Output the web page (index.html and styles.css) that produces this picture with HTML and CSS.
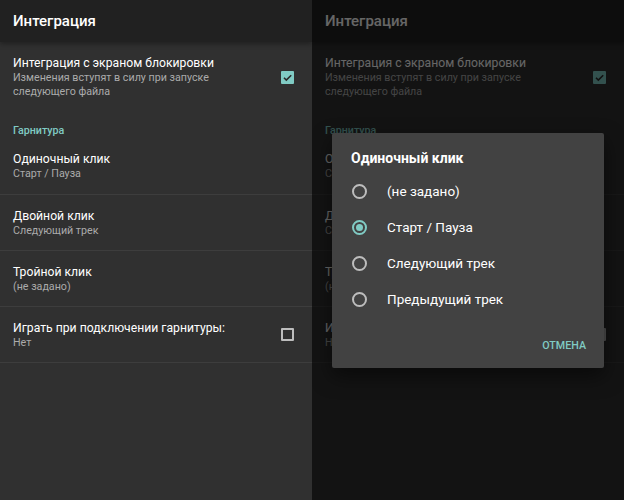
FILE: index.html
```html
<!DOCTYPE html>
<html lang="ru">
<head>
  <meta charset="UTF-8">
  <meta name="viewport" content="width=device-width, initial-scale=1.0">
  <title>Интеграция</title>
  <link rel="stylesheet" href="styles.css">
</head>
<body>
  <div class="screens">
    <section class="screen">
      <header class="toolbar">Интеграция</header>
      <div class="pref pref-first">
        <div class="pref-text">
          <div class="pref-title">Интеграция с экраном блокировки</div>
          <div class="pref-summary">Изменения вступят в силу при запуске следующего файла</div>
        </div>
        <span class="checkbox checked">
          <svg width="13" height="13" viewBox="0 0 13 13"><path d="M3 6.8l2.3 2.3L10.2 4.2" fill="none" stroke="#2b2b2b" stroke-width="1.6"/></svg>
        </span>
      </div>
      <div class="category">Гарнитура</div>
      <div class="pref">
        <div class="pref-text">
          <div class="pref-title">Одиночный клик</div>
          <div class="pref-summary">Старт / Пауза</div>
        </div>
      </div>
      <div class="pref">
        <div class="pref-text">
          <div class="pref-title">Двойной клик</div>
          <div class="pref-summary">Следующий трек</div>
        </div>
      </div>
      <div class="pref">
        <div class="pref-text">
          <div class="pref-title">Тройной клик</div>
          <div class="pref-summary">(не задано)</div>
        </div>
      </div>
      <div class="pref">
        <div class="pref-text">
          <div class="pref-title">Играть при подключении гарнитуры:</div>
          <div class="pref-summary">Нет</div>
        </div>
        <span class="checkbox"></span>
      </div>
    </section>

    <section class="screen">
      <header class="toolbar">Интеграция</header>
      <div class="pref pref-first">
        <div class="pref-text">
          <div class="pref-title">Интеграция с экраном блокировки</div>
          <div class="pref-summary">Изменения вступят в силу при запуске следующего файла</div>
        </div>
        <span class="checkbox checked">
          <svg width="13" height="13" viewBox="0 0 13 13"><path d="M3 6.8l2.3 2.3L10.2 4.2" fill="none" stroke="#2b2b2b" stroke-width="1.6"/></svg>
        </span>
      </div>
      <div class="category">Гарнитура</div>
      <div class="pref">
        <div class="pref-text">
          <div class="pref-title">Одиночный клик</div>
          <div class="pref-summary">Старт / Пауза</div>
        </div>
      </div>
      <div class="pref">
        <div class="pref-text">
          <div class="pref-title">Двойной клик</div>
          <div class="pref-summary">Следующий трек</div>
        </div>
      </div>
      <div class="pref">
        <div class="pref-text">
          <div class="pref-title">Тройной клик</div>
          <div class="pref-summary">(не задано)</div>
        </div>
      </div>
      <div class="pref">
        <div class="pref-text">
          <div class="pref-title">Играть при подключении гарнитуры:</div>
          <div class="pref-summary">Нет</div>
        </div>
        <span class="checkbox"></span>
      </div>

      <div class="scrim">
        <div class="dialog">
          <div class="dialog-title">Одиночный клик</div>
          <ul class="choices">
            <li><span class="radio"></span>(не задано)</li>
            <li><span class="radio selected"></span>Старт / Пауза</li>
            <li><span class="radio"></span>Следующий трек</li>
            <li><span class="radio"></span>Предыдущий трек</li>
          </ul>
          <div class="dialog-actions">
            <button type="button">Отмена</button>
          </div>
        </div>
      </div>
    </section>
  </div>
</body>
</html>
```

FILE: styles.css
```css
body {
  margin: 0;
  font-family: Roboto, "Noto Sans", sans-serif;
  background-color: #303030;
  color: #fff;
}
.screens {
  display: flex;
  height: 500px;
}
.screen {
  position: relative;
  width: 312px;
  flex: none;
  background-color: #303030;
  overflow: hidden;
}
.toolbar {
  position: relative;
  z-index: 1;
  height: 42px;
  padding-left: 13px;
  display: flex;
  align-items: center;
  background-color: #212121;
  font-size: 15px;
  font-weight: 500;
  box-shadow: 0 2px 5px rgba(0, 0, 0, 0.35);
}
.pref {
  display: flex;
  align-items: center;
  height: 56px;
  padding: 0 18px 0 13px;
  border-bottom: 1px solid #3d3d3d;
  box-sizing: border-box;
}
.pref-first {
  height: auto;
  padding-top: 13px;
  padding-bottom: 13px;
  border-bottom: none;
}
.pref-text {
  flex: 1;
  padding-right: 40px;
}
.pref-title {
  font-size: 12.2px;
  line-height: 16px;
}
.pref-summary {
  font-size: 10.7px;
  line-height: 14px;
  color: #ababab;
}
.category {
  padding: 12px 13px 0;
  height: 26px;
  box-sizing: border-box;
  font-size: 10.7px;
  line-height: 14px;
  font-weight: 500;
  color: #80cbc4;
}
.category + .pref {
  height: 57px;
}
.checkbox {
  width: 13px;
  height: 13px;
  box-sizing: border-box;
  border: 2px solid #bdbdbd;
  border-radius: 1px;
  flex: none;
  display: flex;
}
.checkbox.checked {
  border: none;
  background-color: #80cbc4;
}

/* dialog over the dimmed copy */
.scrim {
  position: absolute;
  left: 0;
  top: 0;
  right: 0;
  bottom: 0;
  z-index: 2;
  background-color: rgba(0, 0, 0, 0.6);
  display: flex;
  align-items: center;
  justify-content: center;
}
.dialog {
  width: 272px;
  height: 235px;
  box-sizing: border-box;
  margin-top: 1px;
  background-color: #424242;
  border-radius: 2px;
  box-shadow: 0 8px 20px rgba(0, 0, 0, 0.5);
  display: flex;
  flex-direction: column;
}
.dialog-title {
  padding: 16px 19px 0;
  font-size: 14px;
  line-height: 18px;
  font-weight: 700;
}
.choices {
  list-style: none;
  margin: 6px 0 0;
  padding: 0;
}
.choices li {
  display: flex;
  align-items: center;
  height: 36px;
  padding-left: 20px;
  font-size: 13.5px;
}
.radio {
  width: 15px;
  height: 15px;
  box-sizing: border-box;
  border: 2px solid #bdbdbd;
  border-radius: 50%;
  margin-right: 20px;
  flex: none;
  display: flex;
  align-items: center;
  justify-content: center;
}
.radio.selected {
  border-color: #80cbc4;
}
.radio.selected::after {
  content: "";
  width: 7px;
  height: 7px;
  border-radius: 50%;
  background-color: #80cbc4;
}
.dialog-actions {
  margin-top: auto;
  display: flex;
  justify-content: flex-end;
  padding: 0 18px 16px;
}
.dialog-actions button {
  background: none;
  border: none;
  padding: 0;
  font-family: inherit;
  font-size: 10.7px;
  font-weight: 500;
  text-transform: uppercase;
  color: #80cbc4;
  cursor: pointer;
}
```
